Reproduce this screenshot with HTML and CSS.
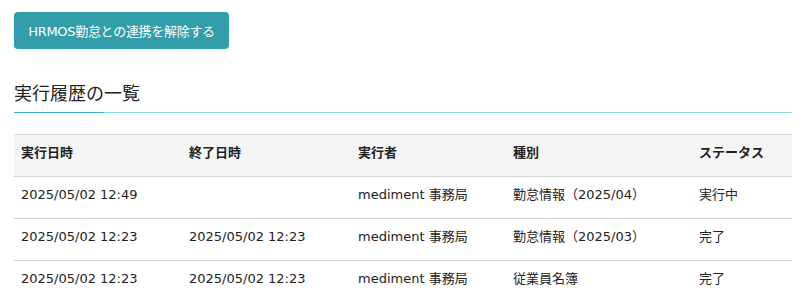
FILE: index.html
```html
<!DOCTYPE html>
<html lang="ja">
<head>
  <meta charset="UTF-8">
  <title>HRMOS連携</title>
  <link rel="stylesheet" href="styles.css">
</head>
<body>
  <div class="page">
    <button class="btn">HRMOS勤怠との連携を解除する</button>

    <h2 class="section-title">実行履歴の一覧</h2>

    <table class="history">
      <thead>
        <tr>
          <th class="c1">実行日時</th>
          <th class="c2">終了日時</th>
          <th class="c3">実行者</th>
          <th class="c4">種別</th>
          <th class="c5">ステータス</th>
        </tr>
      </thead>
      <tbody>
        <tr>
          <td>2025/05/02 12:49</td>
          <td></td>
          <td>mediment 事務局</td>
          <td>勤怠情報（2025/04）</td>
          <td>実行中</td>
        </tr>
        <tr>
          <td>2025/05/02 12:23</td>
          <td>2025/05/02 12:23</td>
          <td>mediment 事務局</td>
          <td>勤怠情報（2025/03）</td>
          <td>完了</td>
        </tr>
        <tr>
          <td>2025/05/02 12:23</td>
          <td>2025/05/02 12:23</td>
          <td>mediment 事務局</td>
          <td>従業員名簿</td>
          <td>完了</td>
        </tr>
      </tbody>
    </table>
  </div>
</body>
</html>
```

FILE: styles.css
```css
body {
  margin: 0;
  font-family: "DejaVu Sans", "Noto Sans CJK JP", sans-serif;
  color: #222;
  background: #fff;
}
.page {
  padding: 12px 4px 0 14px;
}
.btn {
  display: block;
  height: 37px;
  width: 215px;
  padding: 0;
  border: none;
  border-radius: 4px;
  background-color: #319eaa;
  color: #fff;
  font-family: inherit;
  font-size: 13px;
  letter-spacing: -0.3px;
}
.section-title {
  margin: 33px 0 0;
  padding: 0 0 6px;
  font-size: 18px;
  font-weight: normal;
  line-height: 24px;
  color: #222;
  border-bottom: 1px solid #8adbe4;
  position: relative;
}
.section-title::after {
  content: "";
  position: absolute;
  left: 0;
  bottom: -1px;
  width: 90px;
  height: 1px;
  background: #3aaec4;
}
.history {
  width: 100%;
  margin-top: 21px;
  border-collapse: collapse;
  font-size: 13px;
  line-height: 19px;
  table-layout: fixed;
}
.history th,
.history td {
  text-align: left;
  padding: 8px 7px 14px;
  border-top: 1px solid #d4d4d4;
  white-space: nowrap;
}
.history th {
  background: #f5f5f5;
  font-weight: bold;
}
.c1 { width: 154px; }
.c2 { width: 155px; }
.c3 { width: 141px; }
.c4 { width: 172px; }
```
